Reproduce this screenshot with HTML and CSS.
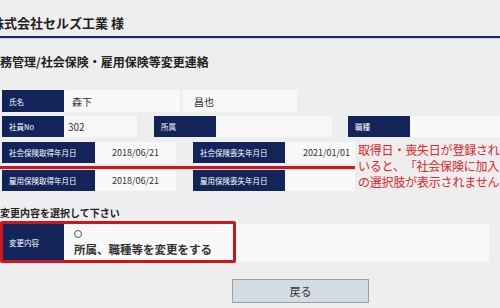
FILE: index.html
```html
<!DOCTYPE html>
<html lang="ja">
<head>
  <meta charset="UTF-8">
  <meta name="viewport" content="width=device-width, initial-scale=1.0">
  <title>社会保険・雇用保険等変更連絡</title>
  <link rel="stylesheet" href="styles.css">
</head>
<body>
  <div class="header">
    <h1 class="company">株式会社セルズ工業 様</h1>
  </div>
  <h2 class="page-title">労務管理/社会保険・雇用保険等変更連絡</h2>

  <div class="form">
    <div class="row row-1">
      <div class="label">氏名</div>
      <div class="value name-1">森下</div>
      <div class="value name-2">昌也</div>
    </div>
    <div class="row row-2">
      <div class="label">社員No</div>
      <div class="value no">302</div>
      <div class="label label-dept">所属</div>
      <div class="value dept"></div>
      <div class="label">職種</div>
      <div class="value job"></div>
    </div>
    <div class="row row-3">
      <div class="label wide">社会保険取得年月日</div>
      <div class="value date">2018/06/21</div>
      <div class="label wide2">社会保険喪失年月日</div>
      <div class="value date2">2021/01/01</div>
    </div>
    <div class="row row-4">
      <div class="label wide">雇用保険取得年月日</div>
      <div class="value date">2018/06/21</div>
      <div class="label wide2">雇用保険喪失年月日</div>
      <div class="value date2"></div>
    </div>

    <p class="select-title">変更内容を選択して下さい</p>
    <div class="row row-change">
      <div class="label">変更内容</div>
      <div class="value choice">
        <span class="radio"></span>
        <span class="choice-text">所属、職種等を変更をする</span>
      </div>
    </div>

    <button class="back-btn">戻る</button>
  </div>

  <!-- 注釈 -->
  <div class="note-line"></div>
  <div class="note-box"></div>
  <div class="note-text">
    取得日・喪失日が登録されて<br>
    いると、「社会保険に加入す<br>
    の選択肢が表示されません
  </div>
</body>
</html>
```

FILE: styles.css
```css
*{ padding: 0; margin: 0; box-sizing: border-box; }
body{ background: #eeeeee; font-family: "Noto Sans CJK JP", sans-serif; color: #222;
      width: 500px; height: 308px; overflow: hidden; position: relative; }

.header{ height: 38px; padding-top: 14px; border-bottom: 2px solid #1b2a5e; box-shadow: 0 1px 0 #c9cdd9; }
.company{ font-size: 13px; line-height: 18px; font-weight: bold; margin-left: -9px; white-space: nowrap; }
.page-title{ font-size: 12px; line-height: 18px; font-weight: bold; margin: 15px 0 0 -12px; white-space: nowrap; }

.form{ margin-top: 19px; padding-left: 2px; }
.row{ display: flex; height: 21px; margin-bottom: 5px; }
.row-1{ height: 22px; margin-bottom: 4px; }
.row-3{ margin-bottom: 7px; }
.row-4{ margin-bottom: 0; }

.label{ width: 62px; flex-shrink: 0; background: #13245b; color: #fff; font-size: 7.5px;
        display: flex; align-items: center; padding-left: 7px; }
.label.wide{ width: 93px; }
.label.wide2{ width: 92px; margin-left: 17px; }
.label-dept{ margin-left: 17px; }
.value{ background: #f8f8f8; color: #333; font-size: 10px; display: flex; align-items: center; padding-left: 8px; }

.name-1{ width: 116px; }
.name-2{ width: 114px; margin-left: 3px; padding-left: 11px; }
.no{ width: 73px; padding-left: 4px; }
.dept{ width: 116px; margin-right: 16px; }
.job{ flex: 1; }
.date{ width: 81px; font-size: 9px; justify-content: center; padding-left: 0; }
.date2{ width: 70px; font-size: 9px; padding-left: 18px; }

.select-title{ font-size: 10px; line-height: 14px; font-weight: 600; margin: 15px 0 4px -2px; }
.row-change{ height: 37px; margin-bottom: 0; }
.choice{ width: 425px; flex-direction: column; align-items: flex-start; justify-content: center;
         padding-left: 10px; background: #f9f9f9; }
.radio{ width: 8px; height: 8px; border: 1px solid #555; border-radius: 50%; margin-bottom: 4px; }
.choice-text{ font-size: 11.5px; line-height: 14px; font-weight: 600; color: #333; }

/* form の padding-left 2px と合わせて 232px */
.back-btn{ display: block; width: 137px; height: 24px; margin: 18px 0 0 230px;
           background: #d4dce3; border: 1px solid #9aa0a6; font-family: inherit; font-size: 11px; color: #333; }

/* 注釈（赤線） */
.note-line{ position: absolute; left: 0; top: 166px; width: 355px; height: 3px; background: #d8121c; }
.note-box{ position: absolute; left: 0; top: 221px; width: 236px; height: 42px;
           border: 3px solid #d4141c; border-radius: 2px; }
.note-text{ position: absolute; left: 358px; top: 142px; font-size: 12px; line-height: 16px;
            color: #e3232a; white-space: nowrap; letter-spacing: -0.2px;
            text-spacing-trim: space-all; font-feature-settings: "chws" 0, "halt" 0; }
```
